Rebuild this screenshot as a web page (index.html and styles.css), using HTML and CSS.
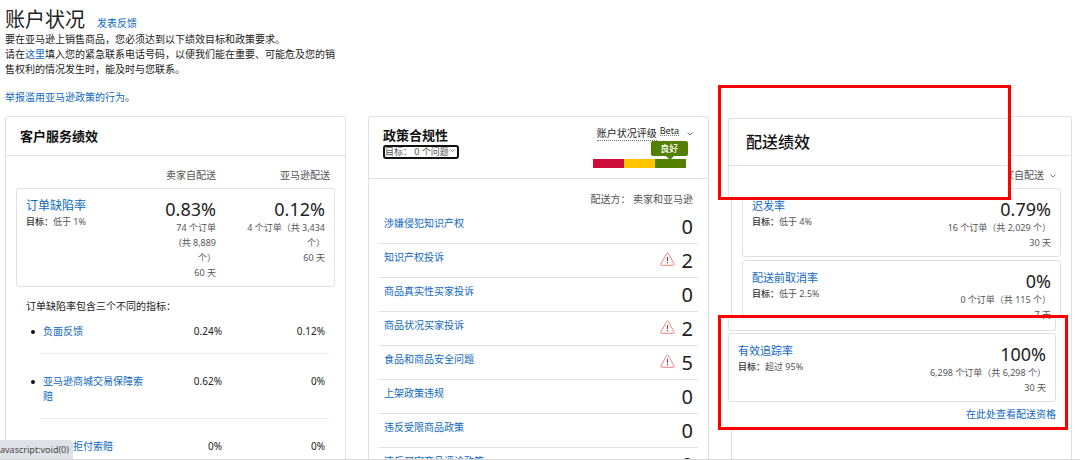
FILE: index.html
```html
<!DOCTYPE html>
<html lang="zh-CN">
<head>
<meta charset="utf-8">
<title>账户状况</title>
<link rel="stylesheet" href="styles.css">
</head>
<body>
<main class="page">
  <header class="intro">
    <div class="intro-head"><h1>账户状况</h1><a href="#">发表反馈</a></div>
    <p>要在亚马逊上销售商品，您必须达到以下绩效目标和政策要求。</p>
    <p>请在<a href="#">这里</a>填入您的紧急联系电话号码，以便我们能在重要、可能危及您的销售权利的情况发生时，能及时与您联系。</p>
    <p class="report"><a href="#">举报滥用亚马逊政策的行为</a>。</p>
  </header>

  <div class="cards">
    <section class="card">
      <div class="card-head"><h2>客户服务绩效</h2></div>
      <div class="card-body">
        <div class="columns labels"><span></span><span>卖家自配送</span><span>亚马逊配送</span></div>
        <div class="metric columns">
          <div class="metric-name"><a href="#">订单缺陷率</a><p><b>目标：</b>低于 1%</p></div>
          <div class="metric-value narrow"><strong>0.83%</strong><p>74 个订单<br>(共 8,889<br>个）<br>60 天</p></div>
          <div class="metric-value"><strong>0.12%</strong><p>4 个订单（共 3,434<br>个）<br>60 天</p></div>
        </div>
        <p class="note">订单缺陷率包含三个不同的指标：</p>
        <ul class="breakdown">
          <li><a href="#">负面反馈</a><span>0.24%</span><span>0.12%</span></li>
          <li><a href="#">亚马逊商城交易保障索赔</a><span>0.62%</span><span>0%</span></li>
          <li><a href="#">信用卡拒付索赔</a><span>0%</span><span>0%</span></li>
        </ul>
      </div>
    </section>

    <section class="card">
      <div class="card-head policy-head">
        <div class="policy-title">
          <h2>政策合规性</h2>
          <button class="goal" type="button">目标： 0 个问题
            <svg class="chevron" viewBox="0 0 8 8"><path d="M1.5 1.5l2 2 2-2"/></svg>
          </button>
        </div>
        <div class="rating">
          <button class="rating-label" type="button"><span class="dotted">账户状况评级</span><sup class="dotted">Beta</sup>
            <svg class="chevron" viewBox="0 0 8 8"><path d="M1.5 2.5l2.5 2.5 2.5-2.5"/></svg>
          </button>
          <div class="scale"><i class="bad"></i><i class="risk"></i><i class="good"><span class="badge">良好</span></i></div>
        </div>
      </div>
      <div class="card-body">
        <p class="fulfil">配送方： 卖家和亚马逊</p>
        <ul class="policies">
          <li><a href="#">涉嫌侵犯知识产权</a><strong>0</strong></li>
          <li><a href="#">知识产权投诉</a><svg class="warn" viewBox="0 0 15 14"><path d="M7.5 .8Q8 .8 8.3 1.4L14.2 12.2Q14.5 13.3 13.5 13.3H1.5Q.5 13.3.8 12.2L6.7 1.4Q7 .8 7.5 .8Z"/><path class="mark" d="M7.5 4.8v4.2M7.5 10v1.4"/></svg><strong>2</strong></li>
          <li><a href="#">商品真实性买家投诉</a><strong>0</strong></li>
          <li><a href="#">商品状况买家投诉</a><svg class="warn" viewBox="0 0 15 14"><path d="M7.5 .8Q8 .8 8.3 1.4L14.2 12.2Q14.5 13.3 13.5 13.3H1.5Q.5 13.3.8 12.2L6.7 1.4Q7 .8 7.5 .8Z"/><path class="mark" d="M7.5 4.8v4.2M7.5 10v1.4"/></svg><strong>2</strong></li>
          <li><a href="#">食品和商品安全问题</a><svg class="warn" viewBox="0 0 15 14"><path d="M7.5 .8Q8 .8 8.3 1.4L14.2 12.2Q14.5 13.3 13.5 13.3H1.5Q.5 13.3.8 12.2L6.7 1.4Q7 .8 7.5 .8Z"/><path class="mark" d="M7.5 4.8v4.2M7.5 10v1.4"/></svg><strong>5</strong></li>
          <li><a href="#">上架政策违规</a><strong>0</strong></li>
          <li><a href="#">违反受限商品政策</a><strong>0</strong></li>
          <li><a href="#">违反买家商品评论政策</a><strong>0</strong></li>
        </ul>
      </div>
    </section>

    <section class="card">
      <div class="card-head"></div>
      <div class="card-body">
        <button class="channel" type="button">卖家自配送
          <svg class="chevron" viewBox="0 0 8 8"><path d="M1.5 2.5l2.5 2.5 2.5-2.5"/></svg>
        </button>
        <div class="metric">
          <div class="metric-name"><a href="#">迟发率</a><p><b>目标：</b>低于 4%</p></div>
          <div class="metric-value"><strong>0.79%</strong><p>16 个订单（共 2,029 个）<br>30 天</p></div>
        </div>
        <div class="metric">
          <div class="metric-name"><a href="#">配送前取消率</a><p><b>目标：</b>低于 2.5%</p></div>
          <div class="metric-value"><strong>0%</strong><p>0 个订单（共 115 个）<br>7 天</p></div>
        </div>
      </div>

      <div class="callout callout-title">
        <div class="inset-card"><h2>配送绩效</h2></div>
      </div>
      <div class="callout callout-metric">
        <div class="inset">
          <div class="metric-end"></div>
          <div class="metric">
            <div class="metric-name"><a href="#">有效追踪率</a><p><b>目标：</b>超过 95%</p></div>
            <div class="metric-value"><strong>100%</strong><p>6,298 个订单（共 6,298 个）<br>30 天</p></div>
          </div>
          <a class="more" href="#">在此处查看配送资格</a>
        </div>
      </div>
    </section>
  </div>
  <div class="status">avascript:void(0)</div>
</main>
</body>
</html>
```
FILE: styles.css
```css
* { box-sizing: border-box; }

body {
  margin: 0;
  background: #fff;
  color: #222;
  font: 10px/15px "Noto Sans", "Noto Sans CJK SC", sans-serif;
}

h1, h2, p, ul { margin: 0; padding: 0; font-weight: 400; }
ul { list-style: none; }
a { color: #1068bf; text-decoration: none; }
button { padding: 0; border: 0; background: none; color: inherit; font: inherit; }
strong { font-weight: 400; }

.page {
  position: relative;
  display: flex;
  flex-direction: column;
  height: 100vh;
  padding: 8px 8px 0 5px;
  overflow: hidden;
  border-bottom: 1px solid #d5d5d5;
}

.intro { flex: none; }
.intro p { max-width: 338px; }
.intro-head { display: flex; align-items: baseline; gap: 12px; }
h1 { font-size: 20px; line-height: 24px; }
.intro .report { margin: 13px 0 11px; }

.cards {
  flex: 1;
  display: grid;
  grid-template-columns: repeat(3, minmax(0, 1fr));
  gap: 22px;
}

.card {
  position: relative;
  border: 1px solid #e1e1e1;
  border-radius: 3px 3px 0 0;
}

.card-head {
  display: flex;
  align-items: center;
  height: 39px;
  padding: 0 14px;
  border-bottom: 1px solid #e1e1e1;
}

h2 { color: #111; font-size: 13px; line-height: 18px; font-weight: 600; }
.card-body { padding: 12px 10px 0; }

.columns { display: grid; grid-template-columns: minmax(0, 1fr) 68px 109px; }
.labels { grid-template-columns: minmax(0, 1fr) 68px 114px; padding: 0 5px 5px 11px; color: #555; text-align: right; }

.metric {
  display: flex;
  justify-content: space-between;
  margin-bottom: 3px;
  padding: 9px 9px 6px;
  border: 1px solid #e1e1e1;
  border-radius: 3px;
}
.metric.columns { display: grid; margin-bottom: 12px; }
.metric-name a { display: block; font-size: 11px; line-height: 16px; }
.columns .metric-name a { font-size: 12px; }
.metric-name p, .metric-value p { color: #555; font-size: 9px; }
.metric-name b { color: #333; font-weight: 500; }
.metric-value { text-align: right; white-space: nowrap; }
.metric-value strong { display: block; font-size: 18px; line-height: 22px; }

.note { padding-left: 10px; }
.breakdown { padding: 10px 6px 0 24px; }
.breakdown li {
  position: relative;
  display: grid;
  grid-template-columns: minmax(0, 1fr) 74px 103px;
  padding: 0 4px 14px 3px;
}
.breakdown li + li { padding-top: 20px; border-top: 1px solid #ececec; }
.breakdown li::before {
  content: "";
  position: absolute;
  left: -9px;
  bottom: calc(100% - 10px);
  width: 4px;
  height: 4px;
  border-radius: 50%;
  background: #111;
}
.breakdown li + li::before { bottom: calc(100% - 30px); }
.breakdown span { text-align: right; }

.chevron { width: 8px; height: 8px; fill: none; stroke: #777; stroke-width: 1; }

.policy-head { justify-content: space-between; align-items: flex-start; height: 62px; padding-top: 9px; }
.policy-title { display: flex; flex-direction: column; align-items: flex-start; }
.policy-title h2 { line-height: 19px; }
.goal {
  display: flex;
  align-items: center;
  height: 14px;
  border: 2px solid #111;
  border-radius: 3px;
  color: #555;
  font-size: 9px;
  line-height: 10px;
}
.rating { display: flex; flex-direction: column; gap: 17px; }
.rating-label { display: flex; align-items: center; height: 16px; padding-left: 4px; gap: 3px; }
.rating-label .chevron { margin-left: 4px; }
.dotted { border-bottom: 1px dotted #777; line-height: 13px; }
sup.dotted { align-self: flex-start; font-size: 9px; line-height: 9px; }
.scale { display: grid; grid-template-columns: repeat(3, 31px); height: 9px; }
.bad { background: #cc0c39; }
.risk { background: #ffc400; }
.good { position: relative; background: #538000; }
.badge {
  position: absolute;
  right: -2px;
  bottom: 12px;
  width: 37px;
  border-radius: 2px;
  background: #538000;
  color: #fff;
  font-size: 9px;
  font-style: normal;
  font-weight: 500;
  line-height: 15px;
  text-align: center;
}
.badge::after {
  content: "";
  position: absolute;
  top: 100%;
  left: 15px;
  border: 4px solid transparent;
  border-top-color: #538000;
  border-bottom: 0;
}

.fulfil { padding: 1px 5px 3px; color: #555; text-align: right; }
.policies li {
  display: flex;
  align-items: center;
  height: 34px;
  padding: 0 5px;
  border-bottom: 1px solid #e1e1e1;
}
.policies a { flex: 1; padding-bottom: 6px; }
.policies strong { width: 18px; font-size: 20px; line-height: 24px; text-align: right; }
.warn { width: 15px; height: 14px; margin-bottom: 4px; fill: none; stroke: #ee8585; stroke-width: 1; }
.warn .mark { stroke: #d6202b; stroke-width: 1; }

.channel { display: flex; align-items: center; gap: 5px; margin: 0 4px 5px auto; color: #555; }

.callout { position: absolute; left: -14px; height: 115px; border: 3px solid #f00; }
.callout-title { top: -32px; right: 60px; padding: 30px 0 0 7px; background: #fff; }
.inset-card {
  height: 79px;
  border: 1px solid #e1e1e1;
  border-width: 1px 0 0 1px;
  border-radius: 3px 0 0;
}
.inset-card h2 { padding: 11px 17px; border-bottom: 1px solid #e1e1e1; font-size: 16px; line-height: 24px; font-weight: 500; }
.callout-metric { top: 198px; right: 3px; padding-top: 1px; }
.inset { height: 108px; padding: 0 9px 0 7px; background: #fff; }
.metric-end { height: 12px; margin-bottom: 2px; border: 1px solid #e1e1e1; border-top: 0; border-radius: 0 0 3px 3px; }
.more { display: block; padding-top: 2px; text-align: right; }

.status {
  position: absolute;
  left: 0;
  bottom: 0;
  width: 73px;
  height: 19px;
  overflow: hidden;
  border-radius: 0 3px 0 0;
  background: #dee1e6;
  color: #444;
  font-size: 9px;
  line-height: 19px;
}
```
